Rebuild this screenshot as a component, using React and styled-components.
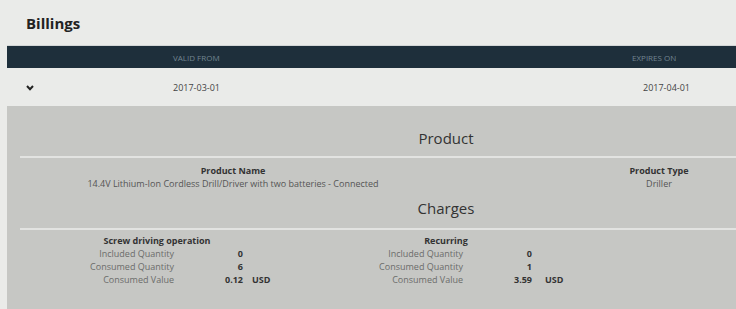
import React from "react";
import styled, { createGlobalStyle } from "styled-components";

const GlobalStyle = createGlobalStyle`
  html, body {
    margin: 0;
    padding: 0;
    background: #eaebe9;
    overflow: hidden;
  }
  body {
    font-family: "Open Sans", "Liberation Sans", sans-serif;
    color: #333;
  }
`;

const Viewport = styled.div`
  width: 100%;
  height: 309px;
  overflow: hidden;
`;

const Page = styled.div`
  width: 878px;
  margin-left: 7px;
`;

const Title = styled.h1`
  margin: 0;
  padding: 13px 0 0 19px;
  height: 32px;
  font-size: 15px;
  line-height: 20px;
  font-weight: 700;
  color: #222;
`;

const Grid = styled.div`
  display: grid;
  grid-template-columns: 166px 459px 1fr;
  align-items: center;
`;

const HeaderBar = styled(Grid)`
  height: 22px;
  background: #1e2f3b;
  border-top: 1px solid #d3d6d6;
  font-size: 8px;
  text-transform: uppercase;
  color: #728591;
`;

const Row = styled(Grid)`
  height: 38px;
  font-size: 9px;
  color: #444;
`;

const Cell = styled.div`
  padding-left: ${(p) => p.$pad || 0}px;
`;

const Chevron = styled.svg`
  display: block;
  margin-left: 19px;
  margin-top: 1px;
`;

const Panel = styled.div`
  background: #c6c7c4;
  padding: 22px 13px 0;
  height: 181px;
`;

const Heading = styled.h2`
  margin: 0;
  font-size: 15px;
  font-weight: 400;
  line-height: 20px;
  text-align: center;
  color: #333;
`;

const Divider = styled.div`
  height: 2px;
  background: #e2e3e1;
  margin-top: ${(p) => p.$top}px;
`;

const ProductRow = styled.div`
  display: grid;
  grid-template-columns: 1fr 1fr;
  padding-top: 6px;
  margin-bottom: 8px;
  font-size: 9px;
  line-height: 13px;
  text-align: center;
`;

const Label = styled.div`
  font-weight: 700;
  color: #333;
`;

const Value = styled.div`
  color: #555;
`;

const Blocks = styled.div`
  display: flex;
  padding: 4px 0 0 60px;
  font-size: 9px;
  line-height: 13px;
`;

const Block = styled.div`
  width: 289px;
`;

const BlockTitle = styled.div`
  width: 154px;
  text-align: center;
  font-weight: 700;
  color: #333;
`;

const ChargeRow = styled.div`
  display: grid;
  grid-template-columns: 94px 69px auto;
`;

const ChargeLabel = styled.div`
  text-align: right;
  color: #6b6c6a;
`;

const ChargeValue = styled.div`
  text-align: right;
  font-weight: 700;
  color: #333;
`;

const Unit = styled.div`
  padding-left: ${(p) => p.$pad}px;
  font-weight: 700;
  color: #333;
`;

const charges = [
  {
    title: "Screw driving operation",
    unitPad: 9,
    rows: [
      ["Included Quantity", "0"],
      ["Consumed Quantity", "6"],
      ["Consumed Value", "0.12", "USD"],
    ],
  },
  {
    title: "Recurring",
    unitPad: 13,
    rows: [
      ["Included Quantity", "0"],
      ["Consumed Quantity", "1"],
      ["Consumed Value", "3.59", "USD"],
    ],
  },
];

export default function App() {
  return (
    <Viewport>
      <GlobalStyle />
      <Page>
        <Title>Billings</Title>
        <HeaderBar>
          <Cell />
          <Cell>Valid From</Cell>
          <Cell>Expires On</Cell>
        </HeaderBar>
        <Row>
          <Cell>
            <Chevron width="8" height="6" viewBox="0 0 8 6">
              <polyline
                points="1,1 4,4.2 7,1"
                fill="none"
                stroke="#222"
                strokeWidth="2"
              />
            </Chevron>
          </Cell>
          <Cell>2017-03-01</Cell>
          <Cell $pad={11}>2017-04-01</Cell>
        </Row>
        <Panel>
          <Heading>Product</Heading>
          <Divider $top={8} />
          <ProductRow>
            <div>
              <Label>Product Name</Label>
              <Value>14.4V Lithium-Ion Cordless Drill/Driver with two batteries - Connected</Value>
            </div>
            <div>
              <Label>Product Type</Label>
              <Value>Driller</Value>
            </div>
          </ProductRow>
          <Heading>Charges</Heading>
          <Divider $top={10} />
          <Blocks>
            {charges.map((c) => (
              <Block key={c.title}>
                <BlockTitle>{c.title}</BlockTitle>
                {c.rows.map(([label, value, unit]) => (
                  <ChargeRow key={label}>
                    <ChargeLabel>{label}</ChargeLabel>
                    <ChargeValue>{value}</ChargeValue>
                    {unit && <Unit $pad={c.unitPad}>{unit}</Unit>}
                  </ChargeRow>
                ))}
              </Block>
            ))}
          </Blocks>
        </Panel>
      </Page>
    </Viewport>
  );
}
